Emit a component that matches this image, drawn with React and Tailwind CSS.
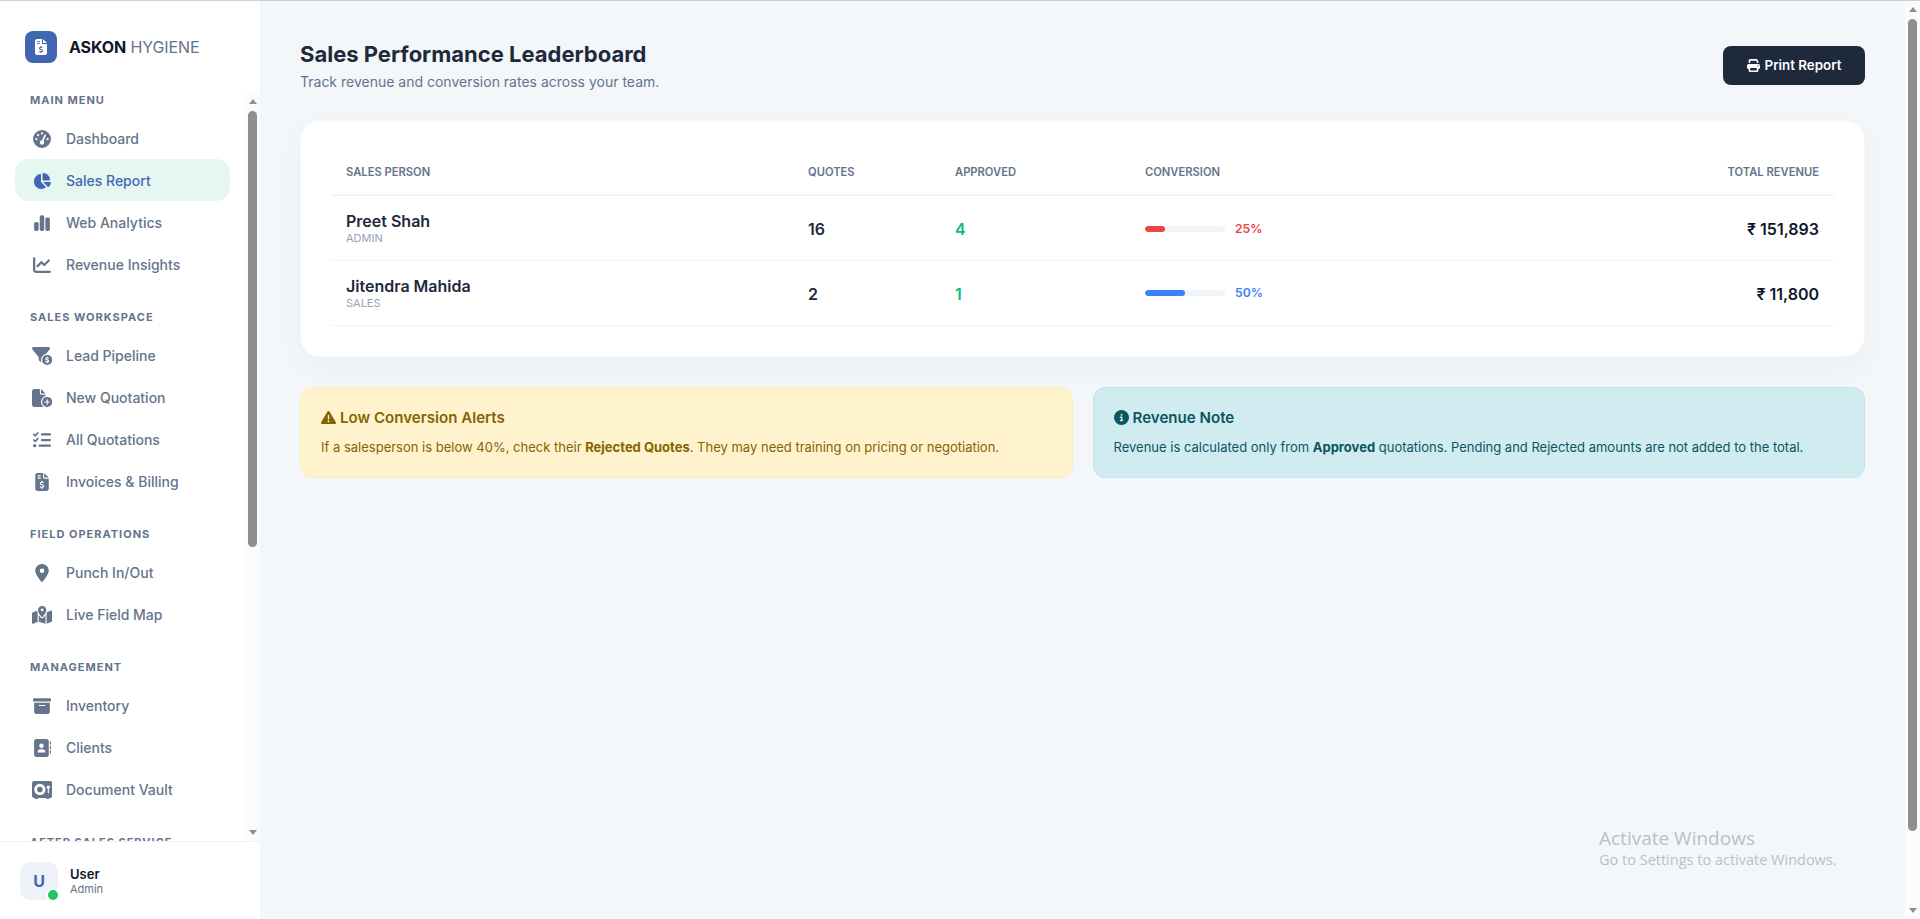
import React from 'react';
import {
    FaGaugeHigh,
    FaChartPie,
    FaChartSimple,
    FaChartLine,
    FaFilterCircleDollar,
    FaFileCirclePlus,
    FaListCheck,
    FaFileInvoiceDollar,
    FaLocationDot,
    FaMapLocationDot,
    FaBoxArchive,
    FaAddressBook,
    FaVault,
    FaPrint,
    FaTriangleExclamation,
    FaCircleInfo
} from 'react-icons/fa6';

const sections = [
    {
        title: 'Main Menu',
        items: [
            { label: 'Dashboard', icon: FaGaugeHigh },
            { label: 'Sales Report', icon: FaChartPie, active: true },
            { label: 'Web Analytics', icon: FaChartSimple },
            { label: 'Revenue Insights', icon: FaChartLine },
        ],
    },
    {
        title: 'Sales Workspace',
        items: [
            { label: 'Lead Pipeline', icon: FaFilterCircleDollar, wide: true },
            { label: 'New Quotation', icon: FaFileCirclePlus, wide: true },
            { label: 'All Quotations', icon: FaListCheck },
            { label: 'Invoices & Billing', icon: FaFileInvoiceDollar },
        ],
    },
    {
        title: 'Field Operations',
        items: [
            { label: 'Punch In/Out', icon: FaLocationDot },
            { label: 'Live Field Map', icon: FaMapLocationDot, wide: true },
        ],
    },
    {
        title: 'Management',
        items: [
            { label: 'Inventory', icon: FaBoxArchive },
            { label: 'Clients', icon: FaAddressBook },
            { label: 'Document Vault', icon: FaVault, wide: true },
        ],
    },
    { title: 'After Sales Service', items: [] },
];

const team = [
    { name: 'Preet Shah', role: 'Admin', quotes: 16, approved: 4, rate: 25, revenue: '₹ 151,893', bar: 'bg-[#ef4444]', text: 'text-[#ef4444]' },
    { name: 'Jitendra Mahida', role: 'Sales', quotes: 2, approved: 1, rate: 50, revenue: '₹ 11,800', bar: 'bg-[#3b82f6]', text: 'text-[#3b82f6]' },
];

function Scrollbar({ thumbTop, thumbBottom }) {
    return (
        <div className="flex w-[15px] shrink-0 flex-col items-center bg-[#fbfbfb]">
            <div className="flex h-[17px] shrink-0 items-center justify-center">
                <div className="h-0 w-0 border-x-[4.5px] border-b-[5px] border-x-transparent border-b-[#8f8f8f]" />
            </div>
            <div className="flex min-h-0 flex-1 flex-col">
                <div className={`${thumbTop} shrink-0`} />
                <div className="w-[9px] flex-1 rounded-[5px] bg-[#8f8f8f]" />
                <div className={`${thumbBottom} shrink-0`} />
            </div>
            <div className="flex h-[17px] shrink-0 items-center justify-center pb-px">
                <div className="h-0 w-0 border-x-[4.5px] border-t-[5px] border-x-transparent border-t-[#8f8f8f]" />
            </div>
        </div>
    );
}

function Sidebar() {
    return (
        <aside className="flex w-[260px] shrink-0 flex-col bg-white">
            {/* Brand */}
            <div className="flex h-[92px] shrink-0 items-start gap-3 pl-[25px] pt-[30px]">
                <div className="flex h-8 w-8 items-center justify-center rounded-lg bg-[#4267b2] text-white">
                    <FaFileInvoiceDollar className="h-4 w-3" />
                </div>
                <div className="text-base leading-8 tracking-[-0.1px] text-[#64748b]">
                    <span className="font-bold text-[#0f172a]">ASKON</span> HYGIENE
                </div>
            </div>

            {/* Menu */}
            <div className="flex min-h-0 flex-1">
                <nav className="min-w-0 flex-1 overflow-hidden">
                    {sections.map((section) => (
                        <div key={section.title} className="mb-[25px]">
                            <div className="mb-[10px] pl-[30px] text-[11px] font-bold uppercase leading-[14px] tracking-[1px] text-[#64748b]">
                                {section.title}
                            </div>
                            {section.items.map((item) => {
                                const Icon = item.icon;
                                return (
                                    <div
                                        key={item.label}
                                        className={`mx-[15px] flex h-[42px] items-center gap-3 rounded-[14px] pl-[15px] pt-px text-sm font-medium ${item.active ? 'bg-[#e6f6f0] text-[#4267b2]' : 'text-[#64748b]'}`}
                                    >
                                        <span className="flex w-6 justify-center">
                                            <Icon className={item.wide ? 'h-[18px] w-[20.25px]' : 'h-[18px] w-[18px]'} />
                                        </span>
                                        {item.label}
                                    </div>
                                );
                            })}
                        </div>
                    ))}
                </nav>
                <Scrollbar thumbTop="h-[1px]" thumbBottom="h-[277px]" />
            </div>

            {/* User */}
            <div className="flex h-[78px] shrink-0 items-center gap-3 border-t border-[#eef1f5] pl-5">
                <div className="relative flex h-[38px] w-[38px] items-center justify-center rounded-[10px] bg-[#eff3f9] text-base font-bold text-[#4267b2]">
                    U
                    <span className="absolute -bottom-[2px] -right-[2px] h-[14px] w-[14px] rounded-full border-2 border-white bg-[#22c55e]" />
                </div>
                <div>
                    <div className="text-[13px] font-semibold leading-4 text-[#0f172a]">User</div>
                    <div className="text-[11px] leading-[14px] text-[#64748b]">Admin</div>
                </div>
            </div>
        </aside>
    );
}

function Leaderboard() {
    return (
        <div className="mb-[30px] rounded-[20px] border border-[#f6f8fa] bg-white p-[30px] shadow-[0_10px_30px_rgba(15,23,42,0.04)]">
            <table className="w-full table-fixed border-collapse">
                <thead>
                    <tr className="h-[44px] border-b-2 border-[#f1f5f9] text-[11.2px] font-semibold uppercase text-[#64748b]">
                        <th className="w-[462px] px-[15px] text-left font-semibold">Sales Person</th>
                        <th className="w-[147px] px-[15px] text-left font-semibold">Quotes</th>
                        <th className="w-[190px] px-[15px] text-left font-semibold">Approved</th>
                        <th className="w-[350px] px-[15px] text-left font-semibold">Conversion</th>
                        <th className="px-[15px] text-right font-semibold">Total Revenue</th>
                    </tr>
                </thead>
                <tbody>
                    {team.map((row) => (
                        <tr key={row.name} className="h-[65px] border-b border-[#f1f5f9]">
                            <td className="px-[15px] pt-px">
                                <div className="mb-px text-base font-semibold leading-[18px] text-[#1e293b]">{row.name}</div>
                                <div className="text-[11px] uppercase leading-[14px] text-[#94a3b8]">{row.role}</div>
                            </td>
                            <td className="px-[15px] pt-[2px] text-base font-semibold text-[#1e293b]">{row.quotes}</td>
                            <td className="px-[15px] pt-[2px] text-base font-semibold text-[#10b981]">{row.approved}</td>
                            <td className="px-[15px] pt-[2px]">
                                <div className="flex items-center gap-[10px]">
                                    <div className="h-[6px] w-20 overflow-hidden rounded-full bg-[#f1f5f9]">
                                        <div className={`h-full rounded-full ${row.bar}`} style={{ width: `${row.rate}%` }} />
                                    </div>
                                    <span className={`text-[12.2px] font-semibold ${row.text}`}>{row.rate}%</span>
                                </div>
                            </td>
                            <td className="px-[15px] pt-[2px] text-right text-base font-semibold text-[#0f172a]">{row.revenue}</td>
                        </tr>
                    ))}
                </tbody>
            </table>
        </div>
    );
}

function Alerts() {
    return (
        <div className="grid grid-cols-2 gap-5">
            <div className="h-[91px] rounded-xl border border-[#ffeeba] bg-[#fff3cd] px-5 pt-5 text-[#856404]">
                <div className="mb-[10px] flex items-center gap-1 text-[15.1px] font-semibold leading-[20px]">
                    <FaTriangleExclamation className="h-[15px] w-[15px]" />
                    Low Conversion Alerts
                </div>
                <p className="text-[13px] leading-[18px]">
                    If a salesperson is below 40%, check their <strong className="font-bold">Rejected Quotes</strong>. They may need training on pricing or negotiation.
                </p>
            </div>
            <div className="h-[91px] rounded-xl border border-[#bee5eb] bg-[#d1ecf1] px-5 pt-5 text-[#0c5460]">
                <div className="mb-[10px] flex items-center gap-1 text-[15.1px] font-semibold leading-[20px]">
                    <FaCircleInfo className="h-[15px] w-[15px]" />
                    Revenue Note
                </div>
                <p className="text-[13px] leading-[18px]">
                    Revenue is calculated only from <strong className="font-bold">Approved</strong> quotations. Pending and Rejected amounts are not added to the total.
                </p>
            </div>
        </div>
    );
}

export default function App() {
    return (
        <div className="flex h-[919px] flex-col overflow-hidden bg-[#f4f7fa] font-['Inter',sans-serif]">
            <div className="h-px shrink-0 bg-[#cfcfcf]" />
            <div className="relative flex min-h-0 flex-1">
                <Sidebar />

                <main className="min-w-0 flex-1 px-10 pt-10">
                    {/* Header */}
                    <div className="mb-[30px] flex items-center justify-between">
                        <div>
                            <h1 className="text-[22px] font-bold leading-[27px] text-[#1e293b]">Sales Performance Leaderboard</h1>
                            <p className="mt-[5px] text-sm leading-[17px] text-[#64748b]">Track revenue and conversion rates across your team.</p>
                        </div>
                        <button className="flex h-[39px] w-[142px] items-center justify-center gap-[5px] rounded-lg bg-[#1e293b] text-[13.33px] font-semibold text-white">
                            <FaPrint className="h-[13px] w-[13px]" />
                            Print Report
                        </button>
                    </div>

                    <Leaderboard />
                    <Alerts />
                </main>

                <Scrollbar thumbTop="h-[1px]" thumbBottom="h-[71px]" />

                {/* Windows watermark */}
                <div className="absolute left-[1599px] top-[825px] font-['Open_Sans',sans-serif] text-[#bcbfc3]">
                    <div className="text-[19px] leading-6">Activate Windows</div>
                    <div className="text-[14.5px] leading-[20px]">Go to Settings to activate Windows.</div>
                </div>
            </div>
        </div>
    );
}
